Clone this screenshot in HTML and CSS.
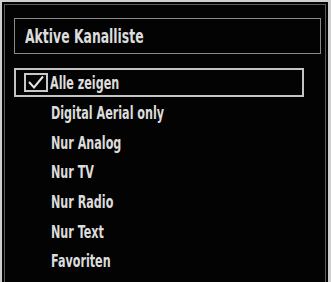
FILE: index.html
```html
<!DOCTYPE html>
<html lang="de">
<head>
<meta charset="utf-8">
<title>Aktive Kanalliste</title>
<link rel="stylesheet" href="styles.css">
</head>
<body>
<div class="panel">
  <div class="frame">
    <div class="title-box"><span class="title">Aktive Kanalliste</span></div>
    <ul class="list">
      <li class="item selected">
        <span class="check"><svg width="20" height="15" viewBox="0 0 20 15"><path d="M3 7 L8 12.5 L17 1.5" fill="none" stroke="#e6e6e6" stroke-width="2"/></svg></span>
        <span class="label">Alle zeigen</span>
      </li>
      <li class="item"><span class="label">Digital Aerial only</span></li>
      <li class="item"><span class="label">Nur Analog</span></li>
      <li class="item"><span class="label">Nur TV</span></li>
      <li class="item"><span class="label">Nur Radio</span></li>
      <li class="item"><span class="label">Nur Text</span></li>
      <li class="item"><span class="label">Favoriten</span></li>
    </ul>
  </div>
</div>
</body>
</html>
```

FILE: styles.css
```css
html, body {
  margin: 0;
  padding: 0;
}
body {
  width: 331px;
  height: 282px;
  overflow: hidden;
  background: #cfcfcf;
  font-family: "DejaVu Sans Condensed", "DejaVu Sans", sans-serif;
  font-stretch: condensed;
  font-weight: bold;
  color: #dcdcdc;
}
.panel {
  margin: 2px 3px 0 2px;
  height: 280px;
  box-sizing: border-box;
  background: #030303;
  padding: 2px 2px 0 2px;
}
.frame {
  height: 100%;
  box-sizing: border-box;
  border: 1px solid #5c5c5c;
  border-bottom: none;
  padding: 13px 4px 0 9px;
}
.title-box {
  height: 36px;
  box-sizing: border-box;
  border: 1px solid #8a8a8a;
  display: flex;
  align-items: center;
  padding-left: 10px;
}
.title {
  display: inline-block;
  font-size: 20px;
  transform: scaleX(0.69);
  transform-origin: left center;
  white-space: nowrap;
}
.list {
  list-style: none;
  margin: 14px 0 0 0;
  padding: 0;
  width: 290px;
}
.item {
  height: 29.6px;
  display: flex;
  align-items: center;
  padding-left: 37px;
  font-size: 18px;
  box-sizing: border-box;
}
.item.selected {
  border: 2px solid #c4c4c4;
  padding-left: 8px;
  height: 29px;
  margin-bottom: 1px;
}
.check {
  flex: none;
  width: 24px;
  height: 19px;
  box-sizing: border-box;
  border: 2px solid #c8c8c8;
  display: flex;
  align-items: center;
  justify-content: center;
  margin-right: 2px;
}
.check svg {
  display: block;
}
.label {
  display: inline-block;
  white-space: nowrap;
  transform: scaleX(0.69);
  transform-origin: left center;
}
```
